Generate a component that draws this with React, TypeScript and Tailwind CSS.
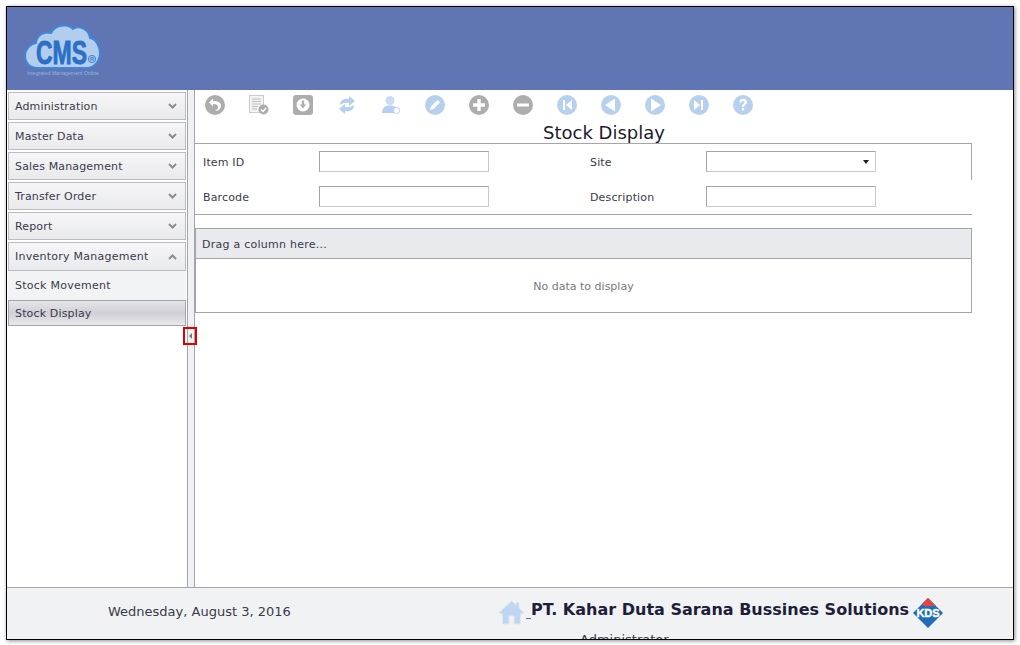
import React from "react";

const menus = ["Administration", "Master Data", "Sales Management", "Transfer Order", "Report"];

const font = "font-['DejaVu_Sans',sans-serif]";

function CmsLogo() {
    return (
        <svg width="80" height="58" viewBox="0 0 80 58" fontFamily="Liberation Sans">
            <path
                d="M13 45C5 45 1 39 1 33C1 26 6 21 12 20C13 12 20 8 27 10C31 2 43 0 49 6C55 2 65 6 66 15C72 16 76 23 76 31C75 40 69 45 62 45Z"
                fill="#b3cdee"
                stroke="#3f87d8"
                strokeWidth="2"
            />
            <text x="12" y="41" fontSize="33" fontWeight="700" fill="#2a70c6" stroke="#2a70c6" strokeWidth="0.9" textLength="51" lengthAdjust="spacingAndGlyphs">CMS</text>
            <circle cx="68" cy="36" r="3.6" fill="none" stroke="#2d76cd" strokeWidth="0.9" />
            <text x="68" y="38" fontSize="5.5" fontWeight="700" textAnchor="middle" fill="#2d76cd">R</text>
            <text x="3" y="52" fontSize="4.5" fill="#8fb6e6" textLength="72" lengthAdjust="spacingAndGlyphs">Integrated Management Online</text>
        </svg>
    );
}

function Chevron({ up }: { up?: boolean }) {
    return (
        <svg width="9" height="6" viewBox="0 0 9 6" className={up ? "rotate-180" : ""}>
            <path d="M1 1L4.5 4.5L8 1" fill="none" stroke="#8c8c90" strokeWidth="2" />
        </svg>
    );
}

function Round({ color, children }: { color: string; children: React.ReactNode }) {
    return (
        <svg width="20" height="20" viewBox="0 0 20 20">
            <circle cx="10" cy="10" r="10" fill={color} />
            {children}
        </svg>
    );
}

const gray = "#adadad";
const blue = "#b7d0ee";

function Toolbar() {
    return (
        <div className="flex h-[29px] items-center gap-[24px] pl-[10px]">
            <Round color={gray}>
                <path d="M8 3.5L4 7.5L8 11.5V9C11 8.8 13 10 13 12C13 13.8 11.8 15 10 15.8C13.5 16 16 14 16 10.8C16 7.5 13 5.8 8 6Z" fill="#fff" />
            </Round>
            <svg width="20" height="20" viewBox="0 0 20 20">
                <rect x="0.5" y="0.5" width="14" height="17" fill="#f3f3f3" stroke="#cccccc" />
                <path d="M3 4H12M3 6.5H12M3 9H12M3 11.5H9M3 14H8" stroke="#bdbdbd" strokeWidth="1" />
                <circle cx="14.5" cy="14.5" r="5" fill={gray} />
                <path d="M12 14.5L14 16.5L17 13" stroke="#fff" strokeWidth="1.4" fill="none" />
            </svg>
            <svg width="20" height="20" viewBox="0 0 20 20">
                <rect width="20" height="20" rx="3" fill={gray} />
                <circle cx="10" cy="10" r="6.5" fill="#fff" />
                <path d="M8.8 5.5H11.2V9.5H13.2L10 13.5L6.8 9.5H8.8Z" fill={gray} />
            </svg>
            <svg width="20" height="20" viewBox="0 0 20 20">
                <path d="M3 10C3 5 7 3 12 4V1L18 6L12 11V8C9 7.5 6 8 3 10Z" fill={blue} />
                <path d="M17 10C17 15 13 17 8 16V19L2 14L8 9V12C11 12.5 14 12 17 10Z" fill={blue} />
            </svg>
            <svg width="20" height="20" viewBox="0 0 20 20">
                <circle cx="9" cy="5.5" r="4.5" fill="#c9dcf3" />
                <path d="M1 18C1 12 5 10.5 9 10.5C13 10.5 17 12 17 18Z" fill={blue} />
                <circle cx="15.5" cy="15.5" r="3" fill="#fff" stroke={blue} />
            </svg>
            <Round color={blue}>
                <path d="M5 15L6 11.5L12.5 5L15 7.5L8.5 14Z" fill="#fff" />
            </Round>
            <Round color={gray}>
                <path d="M8.3 4H11.7V8.3H16V11.7H11.7V16H8.3V11.7H4V8.3H8.3Z" fill="#fff" />
            </Round>
            <Round color={gray}>
                <rect x="4" y="8.5" width="12" height="3" fill="#fff" />
            </Round>
            <Round color={blue}>
                <path d="M6 5H8V15H6ZM15 5V15L9 10Z" fill="#fff" />
            </Round>
            <Round color={blue}>
                <path d="M14 3.5V16.5L4 10Z" fill="#fff" />
            </Round>
            <Round color={blue}>
                <path d="M6 3.5V16.5L16 10Z" fill="#fff" />
            </Round>
            <Round color={blue}>
                <path d="M14 5H12V15H14ZM5 5V15L11 10Z" fill="#fff" />
            </Round>
            <Round color={blue}>
                <path d="M6.3 7.5C6.5 5 8 3.8 10.2 3.8C12.5 3.8 14 5.2 14 7C14 9.5 11.2 9.5 11.2 12H8.9C8.9 8.8 11.5 8.8 11.5 7.2C11.5 6.4 11 5.9 10.1 5.9C9.2 5.9 8.7 6.5 8.6 7.5Z" fill="#fff" />
                <rect x="8.9" y="13" width="2.3" height="2.4" fill="#fff" />
            </Round>
        </div>
    );
}

function Field({ label, select }: { label: string; select?: boolean }) {
    return (
        <div className="flex items-center w-[387px] shrink-0">
            <span className="w-[116px] pt-[3px] text-[11px] tracking-[0.15px] text-[#3a3a4a]">{label}</span>
            <div className="relative w-[170px] h-[21px] border border-[#c8c8ce] border-t-[#a4a4ae] border-l-[#a4a4ae] bg-white">
                {select && <span className="absolute right-[6px] top-[8px] border-x-[3px] border-t-[4px] border-x-transparent border-t-[#1c1c2c]" />}
            </div>
        </div>
    );
}

function App() {
    return (
        <div className={`w-[1020px] h-[645px] bg-white pt-[6px] pl-[6px] overflow-hidden ${font}`}>
            <div className="relative w-[1008px] h-[634px] flex flex-col border border-black shadow-[1px_1px_4px_rgba(0,0,0,0.45)] bg-white">
                <div className="h-[83px] shrink-0 bg-[#6076b4] pl-[17px] pt-[16px]">
                    <CmsLogo />
                </div>

                <div className="flex flex-1 min-h-0 border-b border-[#a4a4ae]">
                    <div className="w-[180px] shrink-0 pt-[2px] pl-[1px] bg-white">
                        <div className="flex flex-col gap-[2px] w-[178px]">
                            {menus.map((m) => (
                                <div key={m} className="h-[28px] flex items-center justify-between pl-[6px] pr-[8px] border border-[#bcbcc0] bg-gradient-to-b from-[#f6f6f8] to-[#e9eaed] text-[11px] tracking-[0.15px] text-[#3a3a4a]">
                                    <span className="pt-[2px]">{m}</span>
                                    <Chevron />
                                </div>
                            ))}
                            <div>
                                <div className="h-[29px] flex items-center justify-between pl-[6px] pr-[8px] border border-[#bcbcc0] bg-gradient-to-b from-[#f6f6f8] to-[#e9eaed] text-[11px] tracking-[0.25px] text-[#3a3a4a]">
                                    <span className="pt-[2px]">Inventory Management</span>
                                    <Chevron up />
                                </div>
                                <div className="h-[29px] flex items-center pl-[7px] pt-[2px] bg-[#f2f3f5] text-[11px] tracking-[0.25px] text-[#3a3a4a]">Stock Movement</div>
                                <div className="h-[26px] flex items-center pl-[6px] pt-[2px] border border-[#a4a4ae] bg-gradient-to-b from-[#e6e6ea] via-[#cfcfd5] to-[#e9e9ed] text-[11px] tracking-[0.15px] text-[#3a3a4a]">Stock Display</div>
                            </div>
                        </div>
                    </div>

                    <div className="w-[8px] shrink-0 bg-[#f0f1f3] border-x border-[#a4a4ae]" />

                    <div className="flex-1 min-w-0 bg-white">
                        <Toolbar />
                        <div className="w-[818px] h-[24px] pt-[3px] text-center text-[18px] leading-[22px] text-[#1c1c2c]">Stock Display</div>
                        <div className="relative w-[777px] h-[72px] border-t border-[#a4a4ae] border-b flex flex-col gap-[14px] pt-[7px] pl-[8px]">
                            <div className="absolute right-0 top-0 h-[36px] w-px bg-[#a4a4ae]" />
                            <div className="flex">
                                <Field label="Item ID" />
                                <Field label="Site" select />
                            </div>
                            <div className="flex">
                                <Field label="Barcode" />
                                <Field label="Description" />
                            </div>
                        </div>
                        <div className="w-[777px] mt-[13px] h-[85px] border border-[#a4a4ae]">
                            <div className="h-[30px] flex items-center pl-[6px] pt-[3px] bg-[#e9eaee] border-b border-[#a4a4ae] text-[11px] tracking-[0.25px] text-[#3a3a4a]">Drag a column here...</div>
                            <div className="h-[53px] flex items-center justify-center pt-[3px] text-[11px] text-[#77777f]">No data to display</div>
                        </div>
                    </div>
                </div>

                <div className="h-[51px] shrink-0 bg-[#f1f2f4] flex overflow-hidden">
                    <div className="w-[371px] pl-[101px] pt-[16px] text-[13px] leading-[16px] text-[#3a3a4a] whitespace-nowrap">Wednesday, August 3, 2016</div>
                    <div className="flex-1 flex flex-col">
                        <div className="flex items-center h-[44px] pl-[121px] shrink-0">
                            <svg width="25" height="25" viewBox="0 0 25 25" className="shrink-0 mt-[5px]">
                                <path d="M12.5 1L17 5V2.5H20V8L25 12.5L23 14H21.5V24H15V16H10V24H3.5V14H2L0 12.5Z" fill="#bed6f2" stroke="#e4e6ea" strokeWidth="1" />
                            </svg>
                            <span className="w-[5px] h-[1px] mt-[17px] ml-[2px] bg-[#4a6fc0] shrink-0" />
                            <span className="text-[16px] leading-[22px] font-bold text-[#1e1e3a] whitespace-nowrap">PT. Kahar Duta Sarana Bussines Solutions</span>
                            <svg width="30" height="30" viewBox="0 0 30 30" className="shrink-0 ml-[4px] mt-[5px]">
                                <path d="M15 0L30 15L15 30L0 15Z" fill="#1f6db5" />
                                <path d="M15 0L23 8H11L9 6Z" fill="#e2453f" />
                                <text x="15" y="19" textAnchor="middle" fontSize="11" fontWeight="700" fill="#fff" stroke="#fff" strokeWidth="0.4" fontFamily="Liberation Sans">KDS</text>
                            </svg>
                        </div>
                        <div className="pl-[202px] text-[13px] leading-[15px] text-[#3a3a4a] whitespace-nowrap">Administrator</div>
                    </div>
                </div>

                <div className="absolute left-[176px] top-[320px] w-[14px] h-[18px] border-2 border-[#e00000] flex items-center justify-center">
                    <span className="border-y-[3px] border-r-[3px] border-y-transparent border-r-[#777]" />
                </div>
            </div>
        </div>
    );
}

export default App;
